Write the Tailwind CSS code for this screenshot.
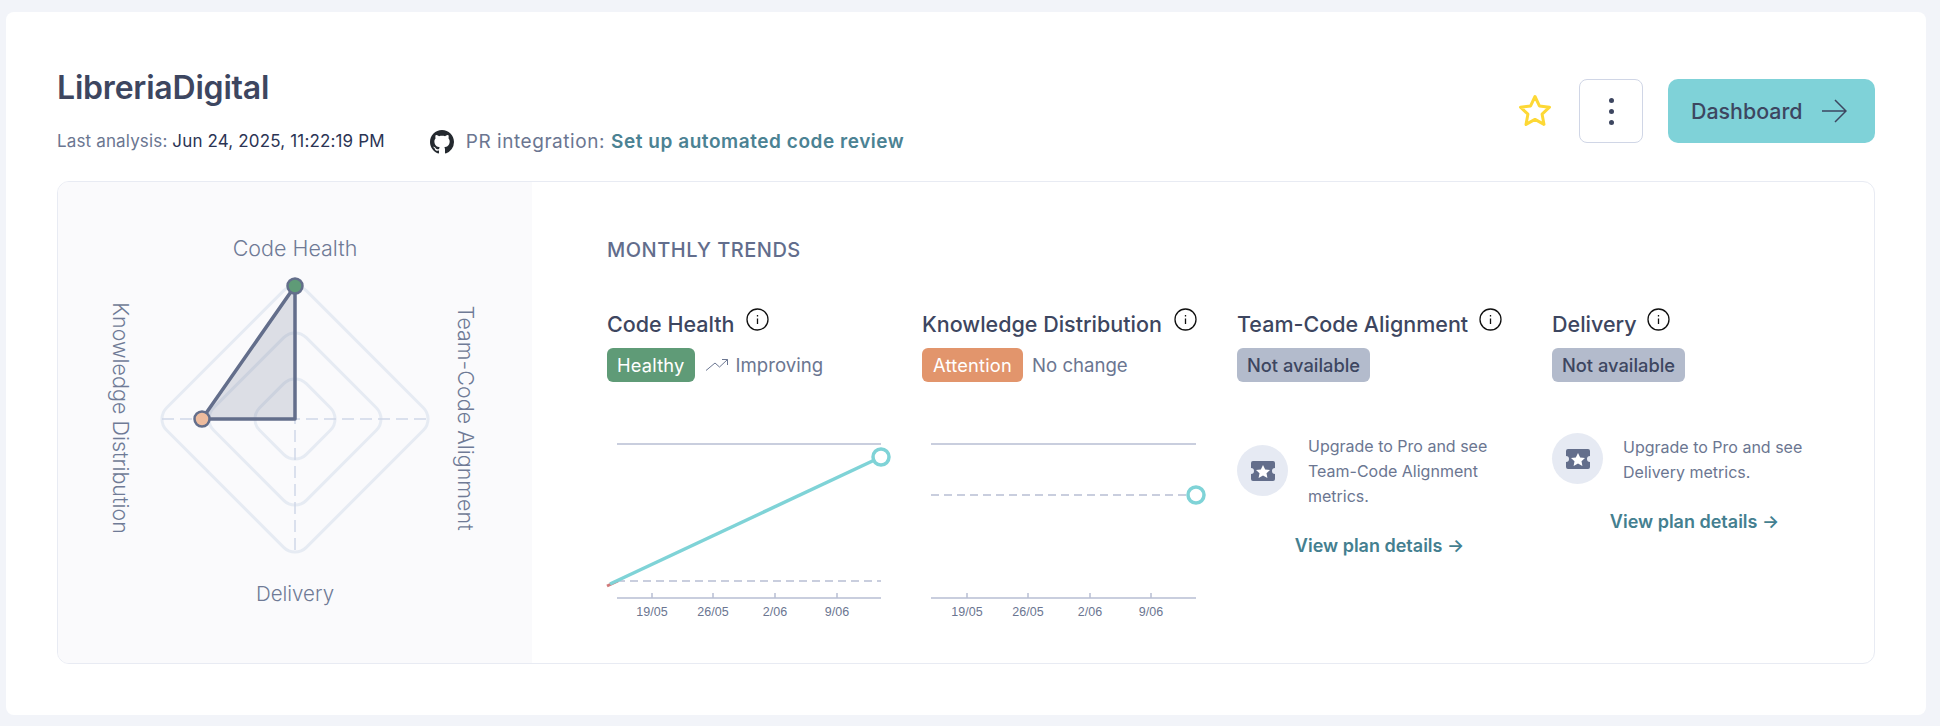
<!DOCTYPE html>
<html lang="en">
<head>
  <meta charset="UTF-8">
  <title>LibreriaDigital</title>
  <script src="https://cdn.jsdelivr.net/npm/@tailwindcss/browser@4"></script>
</head>
<body class="bg-[#f2f4f9] [font-family:Inter,sans-serif] pt-3 pl-1.5 pr-[14px] h-[726px] overflow-hidden">
  <div class="bg-white rounded-lg h-[703px] px-[51px] pt-[58px]">

    <!-- Header -->
    <header class="flex justify-between items-start h-[111px]">
      <div>
        <h1 class="text-[32px] leading-9 font-semibold tracking-[-0.2px] text-[#3d4660]">LibreriaDigital</h1>
        <div class="flex items-center mt-6 h-6 text-[#6b7691]">
          <span class="text-[17px] tracking-[0.15px]">Last analysis: <span class="text-[#2b3454]">Jun 24, 2025, 11:22:19 PM</span></span>
          <svg class="ml-[45px] w-6 h-6 text-[#24292f]" viewBox="0 0 16 16" fill="currentColor"><path d="M8 0C3.58 0 0 3.58 0 8c0 3.54 2.29 6.53 5.47 7.59.4.07.55-.17.55-.38 0-.19-.01-.82-.01-1.49-2.01.37-2.53-.49-2.69-.94-.09-.23-.48-.94-.82-1.13-.28-.15-.68-.52-.01-.53.63-.01 1.08.58 1.23.82.72 1.21 1.87.87 2.33.66.07-.52.28-.87.51-1.07-1.78-.2-3.64-.89-3.64-3.95 0-.87.31-1.59.82-2.15-.08-.2-.36-1.02.08-2.12 0 0 .67-.21 2.2.82.64-.18 1.32-.27 2-.27.68 0 1.36.09 2 .27 1.53-1.04 2.2-.82 2.2-.82.44 1.1.16 1.92.08 2.12.51.56.82 1.27.82 2.15 0 3.07-1.87 3.75-3.65 3.95.29.25.54.73.54 1.48 0 1.07-.01 1.93-.01 2.2 0 .21.15.46.55.38A8.013 8.013 0 0016 8c0-4.42-3.58-8-8-8z"/></svg>
          <span class="ml-3 text-[19px] tracking-[0.55px]">PR integration:</span>
          <a class="ml-1.5 text-[19px] tracking-[0.55px] font-semibold text-[#4b8293]">Set up automated code review</a>
        </div>
      </div>
      <div class="flex items-center mt-[9px]">
        <svg class="w-9 h-9 text-[#fdd835]" viewBox="0 0 36 36" fill="none" stroke="currentColor" stroke-width="3" stroke-linejoin="round"><path d="M18 3.5l4.4 9.4 10.1 1.3-7.4 7 1.9 10.2-9-5-9 5 1.9-10.2-7.4-7 10.100-1.300z"/></svg>
        <button class="ml-[26px] w-16 h-16 rounded-lg border border-[#d0d6e6] flex flex-col items-center justify-center gap-1.5">
          <span class="w-[5px] h-[5px] rounded-full bg-[#3d4660]"></span>
          <span class="w-[5px] h-[5px] rounded-full bg-[#3d4660]"></span>
          <span class="w-[5px] h-[5px] rounded-full bg-[#3d4660]"></span>
        </button>
        <button class="ml-[25px] w-[207px] h-16 rounded-[10px] bg-[#7fd2d8] flex items-center pl-[23px] text-[21.4px] font-medium text-[#3d4660]">
          Dashboard
          <svg class="ml-auto mr-[28px] w-[26px] h-[26px]" viewBox="0 0 26 26" fill="none" stroke="currentColor" stroke-width="1.5"><path d="M1 13h23M14 2l11 11-11 11"/></svg>
        </button>
      </div>
    </header>

    <!-- Panel -->
    <section class="flex h-[483px] rounded-xl border border-[#e8ebf3] overflow-hidden">
      <div class="w-[474px] bg-[#fafafc] shrink-0">
        <svg class="w-[474px] h-[481px]" viewBox="58 182 474 481" font-family="Inter, sans-serif" font-size="21.5" fill="#6f7a96" font-weight="300">
          <g fill="none" stroke="#e6ebf3" stroke-width="3">
            <rect x="196.25" y="320.25" width="197.5" height="197.5" rx="16" transform="rotate(45 295 419)"/>
            <rect x="229.5" y="353.5" width="131" height="131" rx="16" transform="rotate(45 295 419)"/>
            <rect x="262" y="386" width="66" height="66" rx="16" transform="rotate(45 295 419)"/>
          </g>
          <path d="M162 419H428M295 286V552" stroke="#d0d8e8" stroke-width="1.5" stroke-dasharray="12 6" fill="none"/>
          <path d="M295 286L202 419H295Z" fill="#636e8b" fill-opacity="0.2" stroke="#636e8b" stroke-width="3.5" stroke-linejoin="round"/>
          <circle cx="295" cy="286" r="7.5" fill="#5f9b77" stroke="#636e8b" stroke-width="2.5"/>
          <circle cx="202" cy="419" r="7.5" fill="#eebc9e" stroke="#636e8b" stroke-width="2.5"/>
          <text x="295" y="256" text-anchor="middle">Code Health</text>
          <text x="295" y="601" text-anchor="middle" font-size="20.5">Delivery</text>
          <text transform="translate(113 418) rotate(90)" text-anchor="middle">Knowledge Distribution</text>
          <text transform="translate(458 418) rotate(90)" text-anchor="middle">Team-Code Alignment</text>
        </svg>
      </div>

      <div class="flex-1 pl-[75px] pt-[54px]">
        <h2 class="text-[20px] leading-7 font-medium tracking-[0.5px] text-[#626d8c]">MONTHLY TRENDS</h2>

        <div class="grid grid-cols-[315px_315px_315px_315px] mt-[46px]">

          <!-- Code Health -->
          <div>
            <div class="flex items-start h-7">
              <span class="text-[21.5px] leading-7 font-medium text-[#3d4660]">Code Health</span>
              <svg class="ml-3 -mt-0.5 w-[23px] h-[23px]" viewBox="0 0 23 23" fill="none" stroke="#111" stroke-width="1.3"><circle cx="11.5" cy="11.5" r="10.5"/><path d="M11.5 10.5v5.5M11.5 7v1.4"/></svg>
            </div>
            <div class="flex items-center mt-2.5">
              <span class="h-[34px] pt-0.5 px-[10px] rounded-md bg-[#5f9b77] text-white text-[18.3px] tracking-[0.2px] flex items-center">Healthy</span>
              <svg class="ml-[11px] w-[22px] h-3" viewBox="0 0 22 12" fill="none" stroke="#6b7691" stroke-width="1"><path d="M0 11.5L9 4l4.500 4L21.500 .5M16 .5h5.500V6"/></svg>
              <span class="ml-2 mt-0.5 text-[18.6px] text-[#6b7691]">Improving</span>
            </div>
            <svg class="mt-12 w-[300px] h-[200px] overflow-visible" viewBox="607 430 300 200" font-family="Liberation Sans, sans-serif" font-size="12.5" fill="#6b7691" text-anchor="middle">
              <g stroke="#b8bfd3" stroke-width="1.5" fill="none">
                <path d="M617 444H881M617 598H881M652 593V598M713 593V598M775 593V598M837 593V598"/>
                <path d="M617 581H881" stroke-dasharray="8 5"/>
              </g>
              <path d="M607 586L618 581" stroke="#d07a7a" stroke-width="3"/>
              <path d="M610 584L881 457" stroke="#7fd3d7" stroke-width="3.5"/>
              <circle cx="881" cy="457" r="8" fill="#fff" stroke="#7fd3d7" stroke-width="3.5"/>
              <text x="652" y="616">19/05</text><text x="713" y="616">26/05</text><text x="775" y="616">2/06</text><text x="837" y="616">9/06</text>
            </svg>
          </div>

          <!-- Knowledge Distribution -->
          <div>
            <div class="flex items-start h-7">
              <span class="text-[21.5px] leading-7 font-medium text-[#3d4660]">Knowledge Distribution</span>
              <svg class="ml-3 -mt-0.5 w-[23px] h-[23px]" viewBox="0 0 23 23" fill="none" stroke="#111" stroke-width="1.3"><circle cx="11.5" cy="11.5" r="10.5"/><path d="M11.5 10.500v5.500M11.5 7v1.400"/></svg>
            </div>
            <div class="flex items-center mt-2.5">
              <span class="h-[34px] pt-0.5 px-[11px] rounded-md bg-[#e2956c] text-white text-[18.3px] tracking-[0.2px] flex items-center">Attention</span>
              <span class="ml-[9px] mt-0.5 text-[18.6px] text-[#6b7691]">No change</span>
            </div>
            <svg class="mt-12 w-[300px] h-[200px] overflow-visible" viewBox="922 430 300 200" font-family="Liberation Sans, sans-serif" font-size="12.5" fill="#6b7691" text-anchor="middle">
              <g stroke="#b8bfd3" stroke-width="1.5" fill="none">
                <path d="M931 444H1196M931 598H1196M967 593V598M1028 593V598M1090 593V598M1151 593V598"/>
                <path d="M931 495H1196" stroke-dasharray="8 5"/>
              </g>
              <circle cx="1196" cy="495" r="8" fill="#fff" stroke="#7fd3d7" stroke-width="3.5"/>
              <text x="967" y="616">19/05</text><text x="1028" y="616">26/05</text><text x="1090" y="616">2/06</text><text x="1151" y="616">9/06</text>
            </svg>
          </div>

          <!-- Team-Code Alignment -->
          <div>
            <div class="flex items-start h-7">
              <span class="text-[21.5px] leading-7 font-medium text-[#3d4660]">Team-Code Alignment</span>
              <svg class="ml-[11px] -mt-0.5 w-[23px] h-[23px]" viewBox="0 0 23 23" fill="none" stroke="#111" stroke-width="1.3"><circle cx="11.5" cy="11.5" r="10.5"/><path d="M11.5 10.500v5.500M11.500 7v1.400"/></svg>
            </div>
            <div class="flex items-center mt-2.5">
              <span class="h-[34px] pt-0.5 px-[10px] rounded-md bg-[#b3bbcc] text-[#3d4660] text-[18.3px] font-medium flex items-center">Not available</span>
            </div>
            <div class="w-[285px] mt-[51px]">
              <div class="flex gap-5 items-center">
                <span class="w-[51px] h-[51px] shrink-0 rounded-full bg-[#e6eaf3] flex items-center justify-center">
                  <svg class="w-6 h-5" viewBox="0 0 24 20"><path fill="#636e8b" d="M2 0h20a2 2 0 012 2v5a3 3 0 000 6v5a2 2 0 01-2 2H2a2 2 0 01-2-2v-5a3 3 0 000-6V2a2 2 0 012-2z"/><path fill="#fff" d="M12 4l2.200 4.400 4.800.6-3.500 3.300.9 4.700-4.400-2.400-4.400 2.400.9-4.700L5 9l4.800-.6z"/></svg>
                </span>
                <p class="pt-px -mb-px text-[16px] leading-[25px] text-[#6b7691]">Upgrade to Pro and see Team-Code Alignment metrics.</p>
              </div>
              <a class="block mt-[26px] text-center text-[18px] leading-6 font-semibold text-[#447f90]">View plan details →</a>
            </div>
          </div>

          <!-- Delivery -->
          <div>
            <div class="flex items-start h-7">
              <span class="text-[21.5px] leading-7 font-medium text-[#3d4660]">Delivery</span>
              <svg class="ml-2.5 -mt-0.5 w-[23px] h-[23px]" viewBox="0 0 23 23" fill="none" stroke="#111" stroke-width="1.3"><circle cx="11.5" cy="11.5" r="10.5"/><path d="M11.500 10.500v5.500M11.500 7v1.400"/></svg>
            </div>
            <div class="flex items-center mt-2.5">
              <span class="h-[34px] pt-0.5 px-[10px] rounded-md bg-[#b3bbcc] text-[#3d4660] text-[18.3px] font-medium flex items-center">Not available</span>
            </div>
            <div class="w-[285px] mt-[51px]">
              <div class="flex gap-5 items-center">
                <span class="w-[51px] h-[51px] shrink-0 rounded-full bg-[#e6eaf3] flex items-center justify-center">
                  <svg class="w-6 h-5" viewBox="0 0 24 20"><path fill="#636e8b" d="M2 0h20a2 2 0 012 2v5a3 3 0 000 6v5a2 2 0 01-2 2H2a2 2 0 01-2-2v-5a3 3 0 000-6V2a2 2 0 012-2z"/><path fill="#fff" d="M12 4l2.200 4.400 4.800.6-3.500 3.300.9 4.700-4.400-2.400-4.400 2.400.9-4.700L5 9l4.800-.6z"/></svg>
                </span>
                <p class="pt-px -mb-px text-[16px] leading-[25px] text-[#6b7691]">Upgrade to Pro and see Delivery metrics.</p>
              </div>
              <a class="block mt-[26px] text-center text-[18px] leading-6 font-semibold text-[#447f90]">View plan details →</a>
            </div>
          </div>

        </div>
      </div>
    </section>
  </div>
</body>
</html>
